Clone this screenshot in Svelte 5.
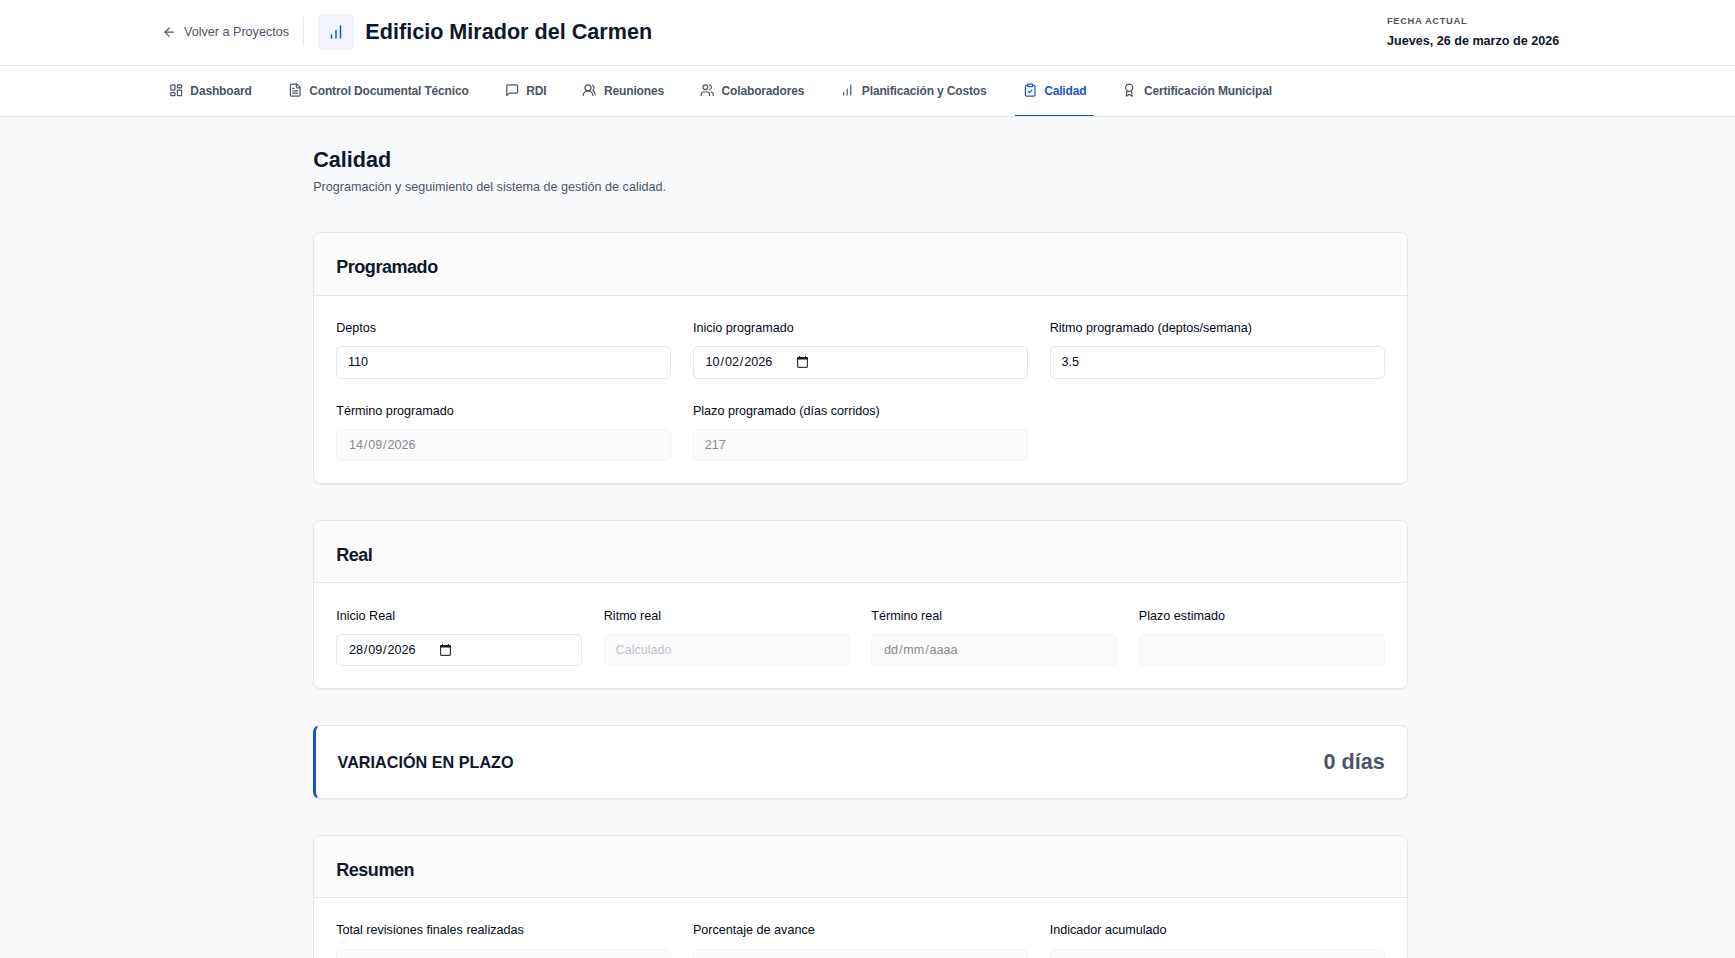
<script>
  const icons = {
    dashboard: '<rect width="7" height="9" x="3" y="3" rx="1"/><rect width="7" height="5" x="14" y="3" rx="1"/><rect width="7" height="9" x="14" y="12" rx="1"/><rect width="7" height="5" x="3" y="16" rx="1"/>',
    file: '<path d="M15 2H6a2 2 0 0 0-2 2v16a2 2 0 0 0 2 2h12a2 2 0 0 0 2-2V7Z"/><path d="M14 2v4a2 2 0 0 0 2 2h4"/><path d="M10 9H8"/><path d="M16 13H8"/><path d="M16 17H8"/>',
    message: '<path d="M21 15a2 2 0 0 1-2 2H7l-4 4V5a2 2 0 0 1 2-2h14a2 2 0 0 1 2 2z"/>',
    usersRound: '<path d="M18 21a8 8 0 0 0-16 0"/><circle cx="10" cy="8" r="5"/><path d="M22 20c0-3.37-2-6.5-4-8a5 5 0 0 0-.45-8.3"/>',
    users: '<path d="M16 21v-2a4 4 0 0 0-4-4H6a4 4 0 0 0-4 4v2"/><circle cx="9" cy="7" r="4"/><path d="M22 21v-2a4 4 0 0 0-3-3.87"/><path d="M16 3.13a4 4 0 0 1 0 7.75"/>',
    chart: '<path d="M12 20V10"/><path d="M18 20V4"/><path d="M6 20v-4"/>',
    clipboard: '<rect width="8" height="4" x="8" y="2" rx="1" ry="1"/><path d="M16 4h2a2 2 0 0 1 2 2v14a2 2 0 0 1-2 2H6a2 2 0 0 1-2-2V6a2 2 0 0 1 2-2h2"/><path d="m9 14 2 2 4-4"/>',
    award: '<path d="m15.477 12.89 1.515 8.526a.5.5 0 0 1-.81.47l-3.58-2.687a1 1 0 0 0-1.197 0l-3.586 2.686a.5.5 0 0 1-.81-.469l1.514-8.526"/><circle cx="12" cy="8" r="6"/>',
    back: '<path d="m12 19-7-7 7-7"/><path d="M19 12H5"/>'
  };

  const tabs = [
    { label: 'Dashboard', icon: 'dashboard' },
    { label: 'Control Documental Técnico', icon: 'file' },
    { label: 'RDI', icon: 'message' },
    { label: 'Reuniones', icon: 'usersRound' },
    { label: 'Colaboradores', icon: 'users' },
    { label: 'Planificación y Costos', icon: 'chart' },
    { label: 'Calidad', icon: 'clipboard', active: true },
    { label: 'Certificación Municipal', icon: 'award' }
  ];

  const programado = [
    { label: 'Deptos', value: '110' },
    { label: 'Inicio programado', date: '10/02/2026' },
    { label: 'Ritmo programado (deptos/semana)', value: '3.5' },
    { label: 'Término programado', date: '14/09/2026', disabled: true },
    { label: 'Plazo programado (días corridos)', value: '217', disabled: true }
  ];

  const real = [
    { label: 'Inicio Real', date: '28/09/2026' },
    { label: 'Ritmo real', placeholder: 'Calculado', disabled: true },
    { label: 'Término real', date: 'dd/mm/aaaa', disabled: true },
    { label: 'Plazo estimado', value: '', disabled: true }
  ];

  const resumen = [
    { label: 'Total revisiones finales realizadas', value: '', disabled: true },
    { label: 'Porcentaje de avance', value: '', disabled: true },
    { label: 'Indicador acumulado', value: '', disabled: true }
  ];
</script>

{#snippet icon(name)}
  <svg class="icon" viewBox="0 0 24 24" fill="none" stroke="currentColor" stroke-width="2" stroke-linecap="round" stroke-linejoin="round" aria-hidden="true">{@html icons[name]}</svg>
{/snippet}

{#snippet field(f)}
  <div class="field">
    <span>{f.label}</span>
    <div class="input" class:disabled={f.disabled}>
      {#if f.date}
        <span class="date">
          {#each f.date.split('/') as part, i}{#if i > 0}<span>/</span>{/if}<span class="part">{part}</span>{/each}
        </span>
        {#if !f.disabled}
          <svg class="calendar" viewBox="0 0 11 12" aria-hidden="true">
            <path d="M.6 3v7.4a1 1 0 0 0 1 1h7.8a1 1 0 0 0 1-1V3" fill="none" stroke="#3a3a3a" stroke-width="1.2" />
            <path d="M2 0h1v1h5V0h1v1h1a1 1 0 0 1 1 1v1.4H0V2a1 1 0 0 1 1-1h1z" fill="#111" />
          </svg>
        {/if}
      {:else if f.placeholder}
        <span class="placeholder">{f.placeholder}</span>
      {:else}
        <span>{f.value}</span>
      {/if}
    </div>
  </div>
{/snippet}

{#snippet card(title, fields, cols)}
  <section class="card">
    <header class="card-head"><h2>{title}</h2></header>
    <div class="grid" class:four={cols === 4}>
      {#each fields as f}{@render field(f)}{/each}
    </div>
  </section>
{/snippet}

<div class="page">
  <div class="topbar">
    <div class="wrap">
      <a class="back" href="#proyectos">{@render icon('back')}<span>Volver a Proyectos</span></a>
      <div class="divider"></div>
      <div class="badge">{@render icon('chart')}</div>
      <h1>Edificio Mirador del Carmen</h1>
      <div class="today">
        <span class="today-label">FECHA ACTUAL</span>
        <span class="today-value">Jueves, 26 de marzo de 2026</span>
      </div>
    </div>
  </div>

  <nav>
    <div class="wrap tabs">
      {#each tabs as t}
        <a class="tab" class:active={t.active} href="#tab">{@render icon(t.icon)}<span>{t.label}</span></a>
      {/each}
    </div>
  </nav>

  <main>
    <div class="intro">
      <h1>Calidad</h1>
      <p>Programación y seguimiento del sistema de gestión de calidad.</p>
    </div>
    {@render card('Programado', programado, 3)}
    {@render card('Real', real, 4)}
    <section class="card variation">
      <h3>VARIACIÓN EN PLAZO</h3>
      <strong>0 días</strong>
    </section>
    {@render card('Resumen', resumen, 3)}
  </main>
</div>

<style>
  :global(body) {
    margin: 0;
    overflow: hidden;
  }
  .page, .page :global(*) {
    box-sizing: border-box;
  }
  .page {
    height: 958px;
    overflow: hidden;
    background: #f9fafc;
    color: #020817;
    font-family: "Liberation Sans", Arial, sans-serif;
    font-size: 12.6px;
    line-height: 18px;
  }
  h1, h2, h3, p {
    margin: 0;
  }
  a {
    color: inherit;
    text-decoration: none;
  }
  .icon {
    width: 14.4px;
    height: 14.4px;
    flex: none;
    display: block;
  }
  .topbar {
    height: 66px;
    background: #fff;
    border-bottom: 1px solid #e5e7eb;
    padding: 0 13.4px 2px 0;
  }
  .wrap {
    width: 1396.8px;
    height: 100%;
    margin: 0 auto;
    display: flex;
    align-items: center;
  }
  .back {
    display: flex;
    align-items: center;
    gap: 7.2px;
    color: #4b5563;
  }
  .back .icon {
    margin-top: 1px;
  }
  .divider {
    width: 1px;
    height: 28.8px;
    margin: 0 14.2px;
    background: #e5e7eb;
  }
  .badge {
    width: 36px;
    height: 36px;
    border-radius: 3.6px;
    background: #eff4ff;
    color: #1a52d3;
    display: flex;
    align-items: center;
    justify-content: center;
  }
  .badge .icon {
    width: 18px;
    height: 18px;
  }
  .topbar h1 {
    margin-left: 11px;
    font-size: 21.6px;
    line-height: 28px;
    color: #0f172a;
  }
  .today {
    margin-left: auto;
    display: flex;
    flex-direction: column;
  }
  .today-label {
    font-size: 9.4px;
    line-height: 14px;
    font-weight: 700;
    letter-spacing: 0.63px;
    color: #4b5563;
    margin-bottom: 4px;
  }
  .today-value {
    font-weight: 700;
    color: #0f172a;
  }
  nav {
    height: 51px;
    background: #fff;
    border-bottom: 1px solid #e5e7eb;
    padding-right: 15px;
  }
  .tabs {
    gap: 21.6px;
  }
  .tab {
    height: 100%;
    padding: 0 7.2px;
    display: flex;
    align-items: center;
    gap: 7.2px;
    font-size: 12px;
    letter-spacing: -0.15px;
    font-weight: 700;
    color: #4b5563;
    white-space: nowrap;
    border-bottom: 1px solid transparent;
  }
  .tab.active {
    color: #1a52d3;
    border-bottom-color: #1a52d3;
  }
  main {
    width: 1094.6px;
    margin: 0 0 0 313.2px;
    padding-top: 29.1px;
    display: flex;
    flex-direction: column;
    gap: 36px;
  }
  .intro h1 {
    font-size: 21.6px;
    line-height: 28.8px;
    color: #0f172a;
  }
  .intro p {
    margin-top: 3.6px;
    color: #4b5563;
  }
  .card {
    background: #fff;
    border: 1px solid #e5e7eb;
    border-radius: 7.2px;
    box-shadow: 0 1px 2px rgba(0, 0, 0, 0.06);
    overflow: hidden;
  }
  .card-head {
    height: 62.4px;
    padding: 22px 22px 0;
    background: #fcfcfc;
    border-bottom: 1px solid #e5e7eb;
  }
  .card-head h2 {
    font-size: 18px;
    line-height: 24px;
    letter-spacing: -0.45px;
    color: #0f172a;
  }
  .grid {
    display: grid;
    grid-template-columns: repeat(3, 1fr);
    gap: 23.2px 21.6px;
    padding: 23.2px 22px 21.6px;
  }
  .grid.four {
    grid-template-columns: repeat(4, 1fr);
  }
  .field {
    display: flex;
    flex-direction: column;
    gap: 9.2px;
  }
  .input {
    height: 32.4px;
    padding: 0 10.8px;
    border: 1px solid #e2e8f0;
    border-radius: 5.4px;
    background: #fff;
    display: flex;
    align-items: center;
  }
  .input.disabled {
    background: #fcfcfc;
    border-color: #f0f3f7;
    color: #87898f;
  }
  .date {
    display: flex;
  }
  .part {
    padding: 0 0.9px;
  }
  .calendar {
    width: 11px;
    height: 12px;
    margin-left: 23.6px;
  }
  .placeholder {
    color: #bcc2cc;
  }
  .variation {
    height: 74px;
    padding: 1px 22px 0 21.4px;
    border-left: 3px solid #1a52d3;
    display: flex;
    align-items: center;
    justify-content: space-between;
  }
  .variation h3 {
    font-size: 16.2px;
    color: #0f172a;
  }
  .variation strong {
    font-size: 21.6px;
    color: #4b5563;
  }
</style>
